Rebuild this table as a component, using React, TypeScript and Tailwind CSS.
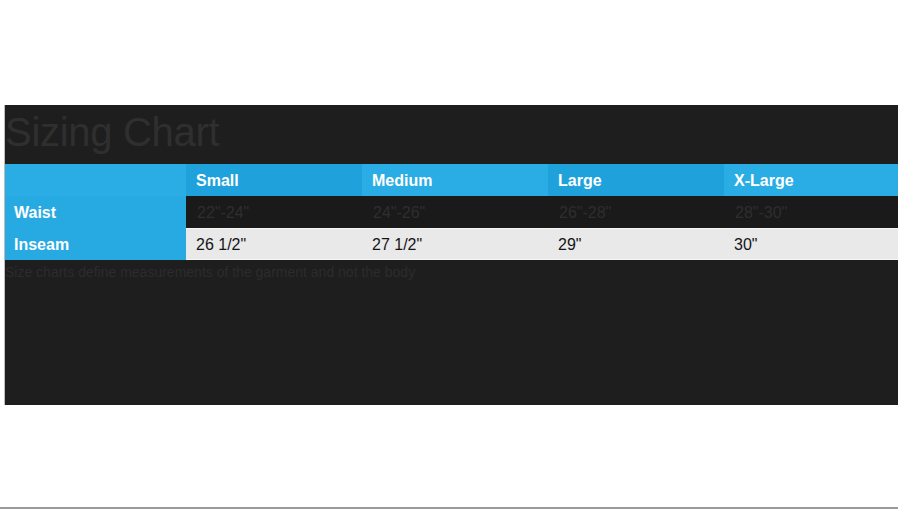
export default function App() {
  const sizes = ['Small', 'Medium', 'Large', 'X-Large'];
  const waist = ['22"-24"', '24"-26"', '26"-28"', '28"-30"'];
  const inseam = ['26 1/2"', '27 1/2"', '29"', '30"'];
  const widths = ['w-[176px]', 'w-[186px]', 'w-[176px]', 'flex-1'];
  const headBg = ['bg-[#1fa2dc]', 'bg-[#2aade4]', 'bg-[#1fa2dc]', 'bg-[#2aade4]'];

  return (
    <div className="w-[898px] h-[509px] bg-white flex flex-col" style={{ fontFamily: '"Liberation Sans", Arial, sans-serif' }}>
      <div className="h-[105px]" />
      <div className="ml-[4px] h-[300px] bg-[#1e1e1e] border-l border-[#bdbdbd] flex flex-col">
        <h1 className="h-[59px] pt-[3px] text-[40px] leading-[48px] text-[#2f2f2f] tracking-[-0.3px]">Sizing Chart</h1>

        <div className="flex h-[32px] text-[16px] font-bold text-white">
          <div className="w-[181px] bg-[#2aade4]" />
          {sizes.map((s, i) => (
            <div key={s} className={`${widths[i]} ${headBg[i]} pl-[10px] pt-[1px] flex items-center`}>{s}</div>
          ))}
        </div>

        <div className="flex h-[32px] text-[16px]">
          <div className="w-[181px] bg-[#27a9e1] pl-[9px] pt-[1px] flex items-center font-bold text-white">Waist</div>
          {waist.map((w, i) => (
            <div key={w} className={`${widths[i]} bg-[#1a1a1a] pl-[11px] pt-[1px] flex items-center text-[#2e2e2e]`}>{w}</div>
          ))}
        </div>

        <div className="flex h-[32px] text-[16px]">
          <div className="w-[181px] bg-[#27a9e1] pl-[9px] pt-[1px] flex items-center font-bold text-white">Inseam</div>
          {inseam.map((v, i) => (
            <div key={v} className={`${widths[i]} bg-[#e9e9ea] pl-[10px] pt-[1px] flex items-center text-[#151515] border-y border-[#f6f6f6]`}>{v}</div>
          ))}
        </div>

        <p className="mt-[3px] text-[14px] leading-[18px] text-[#2c2c2c]">Size charts define measurements of the garment and not the body</p>
      </div>
      <div className="flex-1" />
      <div className="h-[2px] bg-[#9a9a9a]" />
    </div>
  );
}
